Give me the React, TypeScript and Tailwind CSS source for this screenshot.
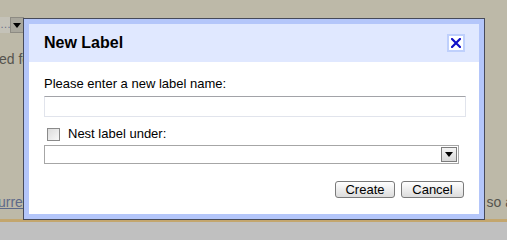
import React from "react";

function CloseIcon() {
    return (
        <svg width="10" height="10" viewBox="0 0 10 10">
            <path d="M1 1 L9 9 M9 1 L1 9" stroke="#1010c8" strokeWidth="2.2" strokeLinecap="square" />
        </svg>
    );
}

function DownArrow() {
    return (
        <svg width="8" height="5" viewBox="0 0 8 5">
            <path d="M0 0 H8 L4 5 Z" fill="#000" />
        </svg>
    );
}

export default function App() {
    return (
        <div className="relative w-[507px] h-[240px] overflow-hidden flex flex-col font-['Liberation_Sans',Arial,sans-serif] text-[13px]">
            {/* Dimmed page behind the dialog */}
            <div className="h-[219px] bg-[#bdb9a8] flex flex-col">
                <div className="mt-[17px] flex items-stretch h-[16px]">
                    <div className="w-[10px] bg-[#c4c2b8] text-[#6a6f88] text-[11px] leading-[14px] overflow-hidden">…</div>
                    <div className="w-[14px] bg-[#a9a79d] border border-[#8d8b83] flex items-center justify-center">
                        <DownArrow />
                    </div>
                </div>
                <div className="mt-[18px] text-[#55544e] text-[14px] leading-[16px] whitespace-nowrap -ml-[1px]">ed fo</div>
                <div className="mt-auto mb-[9px] flex justify-between text-[14px] leading-[16px]">
                    <span className="text-[#5d6a8a] underline -ml-[2px]">urrer</span>
                    <span className="text-[#55544e] -mr-[6px]">so a</span>
                </div>
            </div>
            <div className="h-[3px] bg-[#c3a66e]" />
            <div className="flex-1 bg-[#c0c0c0]" />

            {/* Dialog */}
            <div className="absolute left-[23px] top-[18px] w-[462px] h-[202px] border border-[#464a5a] bg-[#b4c6fa] p-[5px] flex flex-col">
                <div className="h-[38px] bg-[#e0e8ff] flex items-center justify-between pl-[15px] pr-[14px]">
                    <div className="text-[16px] font-bold text-black">New Label</div>
                    <button type="button" className="w-[18px] h-[18px] bg-white border-2 border-[#bfd0fc] flex items-center justify-center">
                        <CloseIcon />
                    </button>
                </div>
                <div className="flex-1 bg-white pl-[15px] pr-[13px] flex flex-col text-black">
                    <div className="mt-[14px] leading-[16px]">Please enter a new label name:</div>
                    <div className="mt-[4px] h-[21px] border border-[#e1e4ec] border-t-[#a2a3a8]" />
                    <div className="mt-[9px] flex items-center h-[16px]">
                        <div className="ml-[3px] w-[13px] h-[13px] border border-[#8a8a8a] bg-gradient-to-br from-[#dcdcdc] to-[#f8f8f8]" />
                        <span className="ml-[8px] leading-[16px]">Nest label under:</span>
                    </div>
                    <div className="mt-[3px] mr-[7px] h-[19px] border border-[#a6a6a6] flex justify-end items-stretch p-[1px]">
                        <div className="w-[16px] border border-[#7c7c7c] bg-gradient-to-b from-[#f4f4f4] to-[#d8d8d8] flex items-center justify-center">
                            <DownArrow />
                        </div>
                    </div>
                    <div className="mt-[17px] mr-[2px] flex justify-end gap-[6px]">
                        <button type="button" className="w-[60px] h-[17px] rounded-[3px] border border-[#7a7a7a] bg-gradient-to-b from-white to-[#dcdcdc] text-[13px] leading-[14px] text-black">Create</button>
                        <button type="button" className="w-[63px] h-[17px] rounded-[3px] border border-[#7a7a7a] bg-gradient-to-b from-white to-[#dcdcdc] text-[13px] leading-[14px] text-black">Cancel</button>
                    </div>
                </div>
            </div>
        </div>
    );
}
